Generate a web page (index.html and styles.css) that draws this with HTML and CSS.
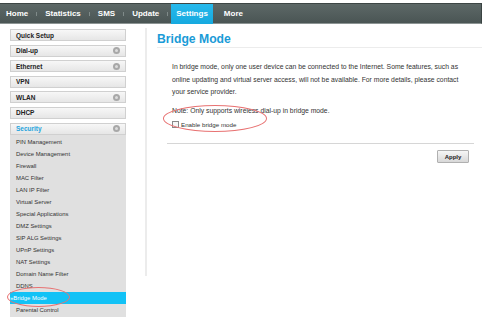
FILE: index.html
```html
<!DOCTYPE html>
<html>
<head>
<meta charset="utf-8">
<link rel="stylesheet" href="styles.css">
</head>
<body>
<div class="page">
  <nav class="topnav">
    <span class="tab">Home</span><span class="sep"></span>
    <span class="tab">Statistics</span><span class="sep"></span>
    <span class="tab">SMS</span><span class="sep"></span>
    <span class="tab">Update</span><span class="sep sep-last"></span>
    <span class="tab active">Settings</span>
    <span class="tab">More</span>
  </nav>
  <div class="main">
    <aside class="sidebar">
      <div class="item">Quick Setup</div>
      <div class="item">Dial-up<i class="dot"></i></div>
      <div class="item">Ethernet<i class="dot"></i></div>
      <div class="item">VPN</div>
      <div class="item">WLAN<i class="dot"></i></div>
      <div class="item">DHCP</div>
      <div class="item open">Security<i class="dot"></i></div>
      <ul class="sub">
        <li>PIN Management</li>
        <li>Device Management</li>
        <li>Firewall</li>
        <li>MAC Filter</li>
        <li>LAN IP Filter</li>
        <li>Virtual Server</li>
        <li>Special Applications</li>
        <li>DMZ Settings</li>
        <li>SIP ALG Settings</li>
        <li>UPnP Settings</li>
        <li>NAT Settings</li>
        <li>Domain Name Filter</li>
        <li>DDNS</li>
        <li class="current"><span class="arr">&raquo;</span>Bridge Mode<span class="ring ring-side"></span></li>
        <li>Parental Control</li>
      </ul>
    </aside>
    <section class="content">
      <h1 class="title">Bridge Mode</h1>
      <div class="body">
        <p class="desc">In bridge mode, only one user device can be connected to the Internet. Some features, such as online updating and virtual server access, will not be available. For more details, please contact your service provider.</p>
        <p class="note">Note: Only supports wireless dial-up in bridge mode.</p>
        <label class="check"><span class="box"></span>Enable bridge mode<span class="ring ring-check"></span></label>
      </div>
      <div class="actions"><button class="apply">Apply</button></div>
    </section>
  </div>
</div>
</body>
</html>
```
FILE: styles.css
```css
* { box-sizing: border-box; }
body { margin: 0; background: #fff; font-family: "Liberation Sans", Arial, sans-serif; color: #333; }
.page { width: 500px; height: 317px; overflow: hidden; position: relative; padding-top: 3px; }

.topnav {
  width: 482px; height: 21px;
  display: flex; align-items: center;
  background: linear-gradient(#5d6867, #4a5554);
  border-top: 1px solid #3d4645;
  border-bottom: 1px solid #8c9493;
  border-right: 1px solid #3a4342;
  padding-left: 6px;
}
.tab { color: #fff; font-weight: bold; font-size: 8px; line-height: 19px; }
.sep { width: 1px; height: 4px; background: #7f8a89; margin: 0 8px; }
.sep.sep-last { margin-right: 3px; }
.tab.active {
  background: linear-gradient(#27b9ec, #15a9df);
  padding: 0 5px; height: 20px; line-height: 20px;
  margin-right: 11px;
}

.main { display: flex; padding-top: 4px; }
.sidebar { width: 116px; margin-left: 10px; padding-top: 1px; display: flex; flex-direction: column; gap: 3.6px; }
.item {
  height: 12px; display: flex; align-items: center; justify-content: space-between;
  padding: 0 5px 0 5px;
  background: linear-gradient(#f7f7f7, #e6e6e6);
  border: 1px solid #d0d0d0;
  font-weight: bold; font-size: 6.5px; color: #222;
}
.item.open { color: #1ea4dd; }
.dot { width: 7px; height: 7px; border-radius: 50%; background: #a8a8a8; position: relative; }
.dot::after { content: ""; position: absolute; left: 2px; top: 2px; width: 3px; height: 3px; border-radius: 50%; background: #dcdcdc; }
.sub { list-style: none; margin: -3.6px 0 0; padding: 1px 0 0; background: #e0e0e0; }
.sub li { height: 12.07px; line-height: 12px; font-size: 5.9px; color: #333; padding-left: 6px; position: relative; }
.sub li.current { background: #12c2f6; padding-left: 0; color: #fff; }
.arr { font-size: 6px; }

.content {
  margin-left: 19px; width: 337px; height: 248px;
  border-left: 2px solid #ececec;
  padding-left: 10px;
}
.title {
  margin: 3px 0 0; font-size: 12.2px; font-weight: bold; color: #1a9bd7;
  height: 17px; line-height: 17px;
  border-bottom: 1px solid #ececec;
}
.body { padding-left: 15px; padding-top: 13px; width: 315px; }
.desc { margin: 0; font-size: 6.8px; line-height: 12.5px; color: #333; }
.note { margin: 6px 0 0; font-size: 6.8px; line-height: 12.5px; }
.check { display: flex; align-items: center; margin-top: 1px; height: 12px; font-size: 6.2px; position: relative; }
.box { width: 7px; height: 7px; border: 1px solid #888; background: #f6f6f6; margin-right: 2px; }
.actions {
  margin: 13px 0 0 10px; width: 307px; border-top: 1px solid #d6d6d6;
  display: flex; justify-content: flex-end; padding: 6px 5px 0 0;
}
.apply {
  width: 32px; height: 13px; padding: 0; font-family: inherit;
  font-weight: bold; font-size: 6px; color: #222;
  background: linear-gradient(#f6f6f6, #d8d8d8);
  border: 1px solid #b0b0b0; border-radius: 1px;
}
.ring { position: absolute; border: 1px solid #e87272; border-radius: 50%; pointer-events: none; }
.ring-check { left: -9px; top: -13px; width: 104px; height: 27px; }
.ring-side { left: -3px; top: -5px; width: 63px; height: 20px; }
```
